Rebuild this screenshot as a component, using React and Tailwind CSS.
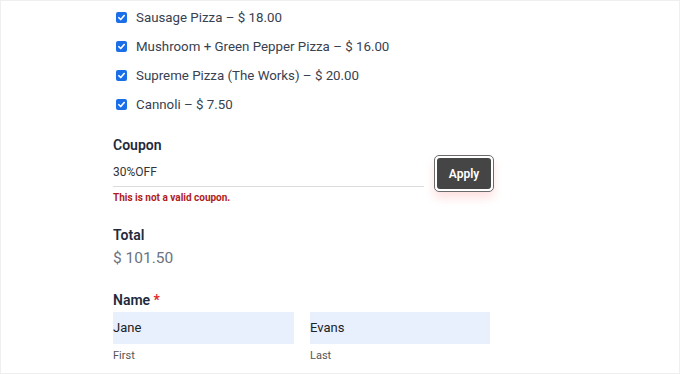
const ITEMS = [
  'Sausage Pizza – $ 18.00',
  'Mushroom + Green Pepper Pizza – $ 16.00',
  'Supreme Pizza (The Works) – $ 20.00',
  'Cannoli – $ 7.50',
];

function Check() {
  return (
    <span className="flex h-[11px] w-[11px] shrink-0 items-center justify-center rounded-[2px] bg-[#1a6fe8]">
      <svg viewBox="0 0 12 12" className="h-[9px] w-[9px]" fill="none" stroke="white" strokeWidth="2.2" strokeLinecap="round" strokeLinejoin="round">
        <path d="M2.5 6.3 L5 8.7 L9.6 3.4" />
      </svg>
    </span>
  );
}

export default function App() {
  return (
    <div className="h-[374px] w-[680px] overflow-hidden border border-[#efefef] bg-white font-['Roboto',sans-serif] text-[#1f2937]">
      <div className="pl-[112px] pt-[2px]">
        <div className="flex flex-col">
          {ITEMS.map((item) => (
            <div key={item} className="flex h-[29px] items-center gap-[9px] pl-[3px]">
              <Check />
              <span className="text-[13.3px] text-[#374151]">{item}</span>
            </div>
          ))}
        </div>

        <div className="mt-[16px] text-[14px] font-semibold leading-[20px] text-[#1f2a3c]">Coupon</div>
        <div className="flex items-start gap-[10px]">
          <div className="w-[311px]">
            <div className="flex h-[32px] items-center border-b border-[#dcdcdc] pt-[2px] text-[12px] text-[#333]">30%OFF</div>
            <div className="mt-[4px] text-[10px] font-bold leading-[14px] text-[#b01b1b]">This is not a valid coupon.</div>
          </div>
          <button className="h-[37px] w-[60px] rounded-[5px] border-[1.5px] border-[#6b6b6b] bg-white p-[2px] shadow-[0_6px_10px_rgba(255,90,90,0.18)]">
            <span className="flex h-full w-full items-center justify-center rounded-[3px] bg-[#454545] text-[12px] font-semibold text-white">Apply</span>
          </button>
        </div>

        <div className="mt-[20px] text-[14px] font-semibold leading-[20px] text-[#1f2a3c]">Total</div>
        <div className="mt-[1px] text-[15.5px] leading-[24px] text-[#6b7280]">$ 101.50</div>

        <div className="mt-[20px] text-[14px] font-semibold leading-[20px] text-[#1f2a3c]">
          Name <span className="text-[#e02424]">*</span>
        </div>
        <div className="mt-[2px] flex gap-[16px]">
          <div className="w-[181px]">
            <div className="flex h-[32px] items-center bg-[#e8f0fe] text-[13px] text-[#222]">Jane</div>
            <div className="mt-[5px] text-[11px] leading-[14px] text-[#555]">First</div>
          </div>
          <div className="w-[180px]">
            <div className="flex h-[32px] items-center bg-[#e8f0fe] text-[13px] text-[#222]">Evans</div>
            <div className="mt-[5px] text-[11px] leading-[14px] text-[#555]">Last</div>
          </div>
        </div>
      </div>
    </div>
  );
}
